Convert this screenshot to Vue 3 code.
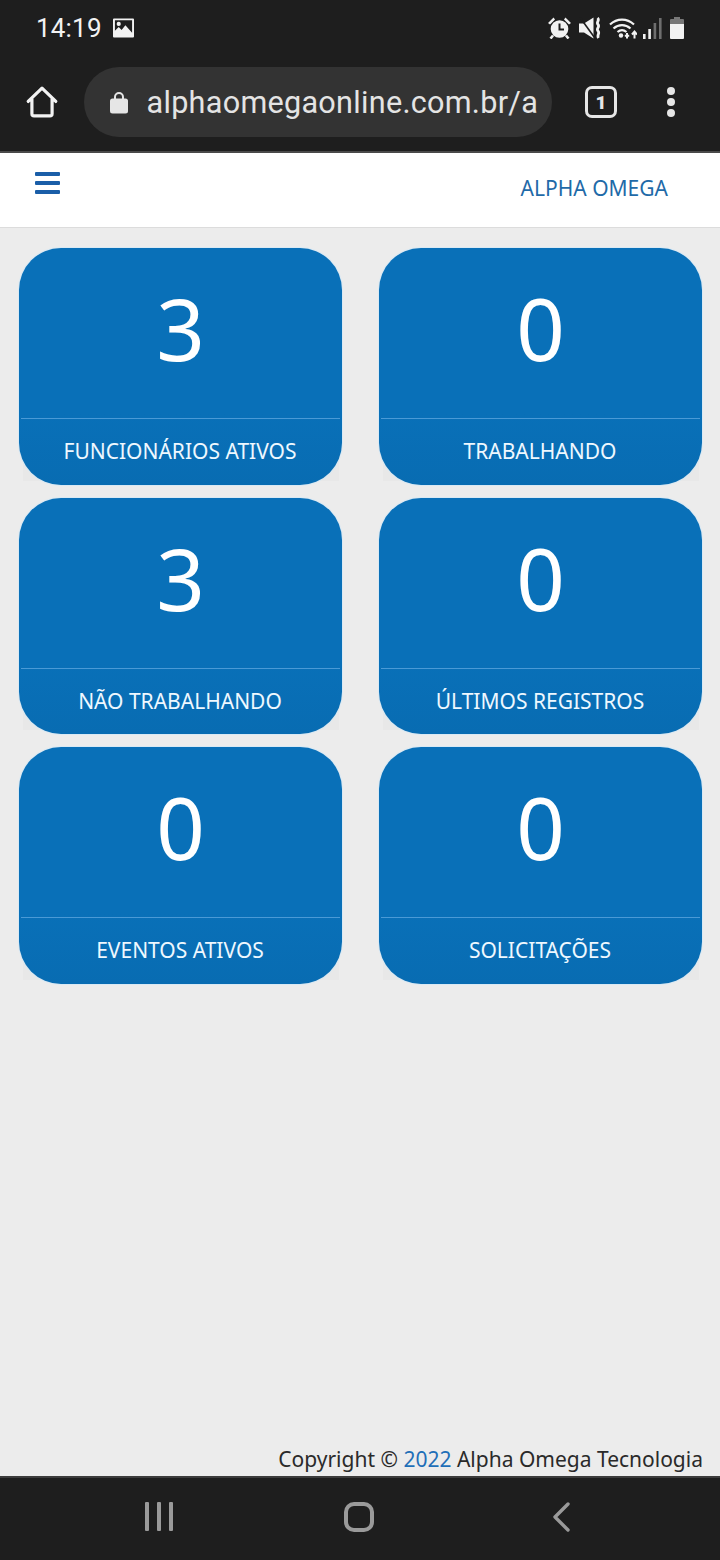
<template>
  <div class="phone">
    <header class="chrome">
      <div class="status">
        <div class="status__left">
          <span class="status__time">14:19</span>
          <svg class="status__pic" viewBox="0 0 22 20">
            <path fill-rule="evenodd" d="M1 0h20a1 1 0 0 1 1 1v18a1 1 0 0 1-1 1H1a1 1 0 0 1-1-1V1a1 1 0 0 1 1-1zm1 2v11l4-4 3 3 4-5 7 8V2zm4 1.500a2.200 2.200 0 1 1 0 4.400 2.200 2.200 0 0 1 0-4.400z" fill="#f2f2f2" />
          </svg>
        </div>
        <div class="status__right">
          <svg class="ico-alarm" viewBox="0 0 23 22">
            <circle cx="11.500" cy="12" r="8.800" fill="#f2f2f2" />
            <path d="M11.500 6.500v6h4.500" fill="none" stroke="#1e1e1e" stroke-width="2" />
            <path d="M0 6 5.500 0.500l1.500 2L2 7.500zM23 6l-5.500-5.500-1.500 2 5 5z" fill="#f2f2f2" />
            <path d="M5 18.500 2.500 21.500M18 18.500l2.500 3" stroke="#f2f2f2" stroke-width="2.600" fill="none" />
          </svg>
          <svg class="ico-mute" viewBox="0 0 22 22">
            <path d="M0 6.500h5L14.500 0.500v21L5 15.500H0z" fill="#f2f2f2" />
            <path d="M1 0.500 15.500 20.500" stroke="#1e1e1e" stroke-width="1.600" />
            <path d="M18.500 1c2.800 2.500-1.800 4 .5 6.500s-2.300 4 0 6.500-1.500 4 .5 7" stroke="#f2f2f2" stroke-width="2.800" fill="none" />
          </svg>
          <svg class="ico-wifi" viewBox="0 0 28 22">
            <path d="M1 7.500c7-6.500 17-6.500 24 0M4.500 11.500c5-4.500 12-4.500 17 0M8.500 15c3-2.500 6-2.500 9 0" stroke="#f2f2f2" stroke-width="2.200" fill="none" />
            <circle cx="12" cy="18.500" r="2.200" fill="#f2f2f2" />
            <path d="M18 16v5.500M15.800 18.800h4.400M25.500 21.500v-6.500M23 17.500l2.500-3 2.500 3" stroke="#f2f2f2" stroke-width="2" fill="none" />
          </svg>
          <svg class="ico-signal" viewBox="0 0 19 22">
            <rect x="0" y="17" width="2.600" height="5" fill="#f2f2f2" />
            <rect x="5.300" y="12" width="2.600" height="10" fill="#f2f2f2" />
            <rect x="10.600" y="6" width="2.600" height="16" fill="#6e6e6e" />
            <rect x="16" y="1" width="2.600" height="21" fill="#6e6e6e" />
          </svg>
          <svg class="ico-battery" viewBox="0 0 14 22">
            <path d="M4 0h6v2h3a1 1 0 0 1 1 1v4H0V3a1 1 0 0 1 1-1h3z" fill="#777" />
            <path d="M0 7h14v14a1 1 0 0 1-1 1H1a1 1 0 0 1-1-1z" fill="#f2f2f2" />
          </svg>
        </div>
      </div>

      <div class="toolbar">
        <svg class="ico-home" viewBox="0 0 32 32">
          <path d="M3 15.500 16 3l13 12.500M6.500 13v14a2 2 0 0 0 2 2h15a2 2 0 0 0 2-2V13" fill="none" stroke="#f2f2f2" stroke-width="3" stroke-linejoin="round" stroke-linecap="round" />
        </svg>
        <div class="omnibox">
          <svg class="ico-lock" viewBox="0 0 18 22">
            <path d="M5 8V5.500a4 4 0 0 1 8 0V8" fill="none" stroke="#e6e6e6" stroke-width="2" />
            <rect x="0" y="7" width="18" height="15" rx="2.500" fill="#e6e6e6" />
          </svg>
          <span class="omnibox__url">alphaomegaonline.com.br/a</span>
        </div>
        <div class="tabs">1</div>
        <div class="kebab"><i></i><i></i><i></i></div>
      </div>
    </header>

    <nav class="topbar">
      <div class="burger"><i></i><i></i><i></i></div>
      <a class="brand">ALPHA OMEGA</a>
    </nav>

    <main class="content">
      <section class="cards">
        <div v-for="card in cards" :key="card.label" class="tile">
          <article class="card">
            <div class="card__value">{{ card.value }}</div>
            <div class="card__label">{{ card.label }}</div>
          </article>
        </div>
      </section>
      <footer class="copyright">
        Copyright © <span class="copyright__year">2022</span> Alpha Omega Tecnologia
      </footer>
    </main>

    <div class="navbar">
      <div class="navbar__recents"><i></i><i></i><i></i></div>
      <div class="navbar__home"></div>
      <svg class="navbar__back" viewBox="0 0 18 30">
        <path d="M16 2 3 15l13 13" fill="none" stroke="#9a9a9a" stroke-width="3.400" stroke-linecap="round" stroke-linejoin="round" />
      </svg>
    </div>
  </div>
</template>

<script setup>
const cards = [
  { value: 3, label: 'FUNCIONÁRIOS ATIVOS' },
  { value: 0, label: 'TRABALHANDO' },
  { value: 3, label: 'NÃO TRABALHANDO' },
  { value: 0, label: 'ÚLTIMOS REGISTROS' },
  { value: 0, label: 'EVENTOS ATIVOS' },
  { value: 0, label: 'SOLICITAÇÕES' },
];
</script>

<style>
html,
body {
  margin: 0;
  background: #ececec;
}
</style>

<style scoped>
.phone {
  width: 720px;
  height: 1560px;
  display: flex;
  flex-direction: column;
  overflow: hidden;
  background: #ececec;
  font-family: "Noto Sans", "Open Sans", sans-serif;
}

.chrome {
  height: 153px;
  box-sizing: border-box;
  flex: none;
  background: #1e1e1e;
  border-bottom: 2px solid #4a4a4a;
}

.status {
  height: 56px;
  display: flex;
  justify-content: space-between;
  align-items: center;
  padding: 0 36px 0 36px;
}

.status__left,
.status__right {
  display: flex;
  align-items: center;
}

.status__time {
  font-family: Roboto, sans-serif;
  font-size: 26px;
  letter-spacing: 0.2px;
  color: #f2f2f2;
}

.status__pic {
  width: 21px;
  height: 20px;
  margin-left: 11px;
}

.ico-alarm {
  width: 23px;
  height: 22px;
}

.ico-mute {
  width: 22px;
  height: 22px;
  margin-left: 8px;
}

.ico-wifi {
  width: 28px;
  height: 22px;
  margin-left: 8px;
}

.ico-signal {
  width: 19px;
  height: 22px;
  margin-left: 6px;
}

.ico-battery {
  width: 14px;
  height: 22px;
  margin-left: 8px;
}

.toolbar {
  height: 70px;
  margin-top: 11px;
  display: flex;
  align-items: center;
}

.ico-home {
  width: 34px;
  height: 34px;
  margin-left: 25px;
  flex: none;
}

.omnibox {
  width: 468px;
  height: 70px;
  box-sizing: border-box;
  margin-left: 25px;
  padding-left: 26px;
  display: flex;
  align-items: center;
  border-radius: 35px;
  background: #333333;
  flex: none;
}

.ico-lock {
  width: 18px;
  height: 23px;
  flex: none;
}

.omnibox__url {
  margin-left: 18.5px;
  font-family: Roboto, sans-serif;
  font-size: 30.6px;
  letter-spacing: 0.28px;
  color: #e4e4e4;
  white-space: nowrap;
}

.tabs {
  width: 32px;
  height: 32px;
  box-sizing: border-box;
  margin-left: 33px;
  border: 3px solid #e6e6e6;
  border-radius: 7px;
  display: flex;
  align-items: center;
  justify-content: center;
  font-family: Roboto, sans-serif;
  font-size: 19px;
  font-weight: 900;
  color: #e6e6e6;
  flex: none;
}

.kebab {
  margin-left: 50px;
  display: flex;
  flex-direction: column;
  gap: 3px;
}

.kebab i {
  width: 8px;
  height: 8px;
  border-radius: 50%;
  background: #e6e6e6;
}

.topbar {
  height: 75px;
  box-sizing: border-box;
  flex: none;
  display: flex;
  justify-content: space-between;
  background: #fff;
  border-bottom: 1px solid #dcdcdc;
  padding: 0 52px 0 35px;
}

.burger {
  margin-top: 19px;
  display: flex;
  flex-direction: column;
  gap: 5px;
}

.burger i {
  width: 25px;
  height: 4px;
  border-radius: 1px;
  background: #1a5ea8;
}

.brand {
  margin-top: 21px;
  font-size: 21px;
  line-height: 28px;
  color: #1f6aa8;
}

.content {
  flex: 1;
  display: flex;
  flex-direction: column;
  justify-content: space-between;
}

.cards {
  display: grid;
  grid-template-columns: 323px 323px;
  grid-template-rows: 237px 236px 237px;
  column-gap: 37px;
  row-gap: 13px;
  padding: 20px 18px 0 19px;
}

.tile {
  position: relative;
}

/* squared panel showing behind the rounded bottom corners */
.tile::before {
  content: "";
  position: absolute;
  left: 4px;
  right: 3px;
  top: 50%;
  bottom: 4px;
  background: #e8e8e8;
}

.card {
  position: relative;
  height: 100%;
  box-sizing: border-box;
  display: flex;
  flex-direction: column;
  border-radius: 42px;
  background: linear-gradient(#0970b8 70%, #086cb2);
  box-shadow: 0 0 0 1px rgba(205, 232, 250, 0.6);
  color: #fff;
}

.card__value {
  height: 170px;
  flex: none;
  display: flex;
  align-items: center;
  justify-content: center;
  font-size: 85px;
  line-height: 1;
  padding-bottom: 10px;
  box-sizing: border-box;
}

.card__label {
  flex: 1;
  margin: 0 2px;
  padding: 18px 1px 0 0;
  text-align: center;
  border-top: 1px solid #4a9ad6;
  font-size: 21px;
  line-height: 28px;
  color: #eef8ff;
}

.copyright {
  height: 34px;
  padding-right: 17px;
  text-align: right;
  font-size: 21px;
  line-height: 34px;
  color: #2a2a2a;
}

.copyright__year {
  color: #1f6fb8;
}

.navbar {
  height: 84px;
  flex: none;
  display: flex;
  align-items: center;
  background: #1e1e1e;
  border-top: 2px solid #3c3c3c;
  box-sizing: border-box;
  padding-bottom: 5px;
}

.navbar__recents {
  margin-left: 145px;
  display: flex;
  gap: 8px;
}

.navbar__recents i {
  width: 4px;
  height: 29px;
  border-radius: 1px;
  background: #9a9a9a;
}

.navbar__home {
  width: 30px;
  height: 30px;
  box-sizing: border-box;
  margin-left: 171px;
  border: 4px solid #9a9a9a;
  border-radius: 10px;
}

.navbar__back {
  width: 18px;
  height: 30px;
  margin-left: 178px;
}
</style>
